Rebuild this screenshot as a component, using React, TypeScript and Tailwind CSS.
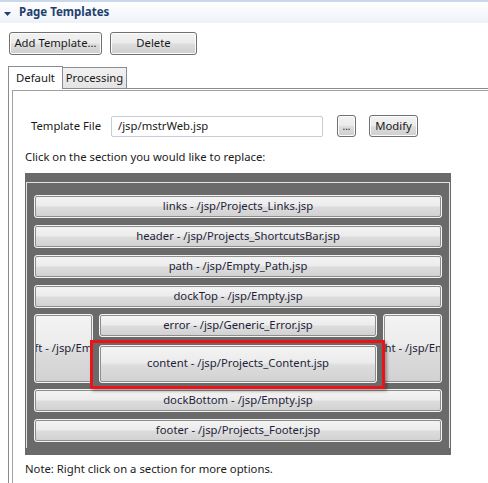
import React from 'react';

const font = { fontFamily: '"Noto Sans", "Open Sans", Arial, sans-serif' };

function WinButton({ label, className = '' }: { label: string; className?: string }) {
  return (
    <div
      className={
        'flex items-center justify-center rounded-[3px] border border-[#707070] bg-[linear-gradient(#f2f2f2_0%,#ebebeb_48%,#dddddd_52%,#cfcfcf_100%)] text-[11.3px] text-[#1a1a1a] shadow-[inset_0_0_0_1px_#fcfcfc] ' +
        className
      }
    >
      {label}
    </div>
  );
}

function Section({ label, className = '', offset = '' }: { label: string; className?: string; offset?: string }) {
  return (
    <div className={'rounded-[3px] border border-[#f4f4f4] bg-[#f4f4f4] ' + className}>
      <div
        className={
          'flex h-full items-center overflow-hidden whitespace-nowrap rounded-[2px] border border-[#8d8d8d] bg-[linear-gradient(#f3f3f3_0%,#ececec_45%,#dcdcdc_55%,#d2d2d2_100%)] text-[11.3px] text-[#1f1f3a] ' +
          (offset ? 'justify-start' : 'justify-center')
        }
      >
        {offset ? <span className={'shrink-0 ' + offset}>{label}</span> : label}
      </div>
    </div>
  );
}

export default function App() {
  return (
    <div className="relative h-[483px] w-[488px] overflow-hidden bg-white" style={font}>
      {/* section header */}
      <div className="h-[23px] border-t-[2px] border-[#c9d8ea] bg-[linear-gradient(#ffffff,#eef2f8)] pt-[1px]">
        <div className="flex items-center">
          <svg width="19" height="18" viewBox="0 0 19 18" className="shrink-0">
            <path d="M4 9 L11 9 L7.5 13 Z" fill="#1f3f6e" />
          </svg>
          <span className="text-[11.5px] font-bold text-[#1f3f6e]">Page Templates</span>
        </div>
      </div>

      {/* toolbar */}
      <div className="mt-[9px] flex gap-[8px] pl-[9px]">
        <WinButton label="Add Template..." className="h-[23px] w-[93px]" />
        <WinButton label="Delete" className="h-[23px] w-[87px]" />
      </div>

      {/* tabs */}
      <div className="mt-[11px] flex items-end pl-[8px]">
        <div className="z-10 -mb-px flex h-[23px] w-[55px] items-center justify-center border border-b-0 border-[#898c95] bg-white text-[11.3px] text-[#1a1a1a]">
          Default
        </div>
        <div className="flex h-[21px] w-[64px] items-center justify-center border border-b-0 border-l-0 border-[#898c95] bg-[linear-gradient(#f2f2f2,#e3e3e3)] text-[11.3px] text-[#1a1a1a]">
          Processing
        </div>
      </div>

      {/* tab panel */}
      <div className="ml-[8px] h-[400px] border-l border-t border-[#898c95] pl-[3px] pt-[1px]">
        <div className="h-full border-l border-t border-[#a0a0a0]">
          <div className="flex items-center pt-[24px]">
            <span className="ml-[18px] w-[80px] text-[11.3px] text-[#1a1a1a]">Template File</span>
            <div className="flex h-[21px] w-[212px] items-center rounded-[2px] border border-[#c5ccd6] pl-[6px] text-[11.3px] text-[#1a1a1a]">
              /jsp/mstrWeb.jsp
            </div>
            <WinButton label="..." className="ml-[14px] h-[22px] w-[19px] !text-[10px]" />
            <WinButton label="Modify" className="ml-[13px] h-[22px] w-[49px]" />
          </div>

          <div className="ml-[12px] mt-[12px] text-[11.3px] text-[#1a1a1a]">
            Click on the section you would like to replace:
          </div>

          {/* layout preview */}
          <div className="ml-[12px] mt-[7px] h-[282px] w-[426px] bg-[#6a6a6a] pt-[9px] pl-[1px] pr-[1px]">
            <div className="h-[266px] border border-b-0 border-[#dfe3e8] px-[7px] pt-[12px]">
              <div className="flex flex-col gap-[7px]">
                <Section label="links - /jsp/Projects_Links.jsp" className="h-[23px]" />
                <Section label="header - /jsp/Projects_ShortcutsBar.jsp" className="h-[23px]" />
                <Section label="path - /jsp/Empty_Path.jsp" className="h-[23px]" />
                <Section label="dockTop - /jsp/Empty.jsp" className="h-[23px]" />
              </div>
              <div className="relative mt-[6px] flex h-[69px] gap-[6px]">
                <Section label="left - /jsp/Empty.jsp" offset="ml-[-11px]" className="h-[69px] w-[59px]" />
                <div className="flex w-[278px] flex-col gap-[8px]">
                  <Section label="error - /jsp/Generic_Error.jsp" className="h-[23px]" />
                  <Section label="content - /jsp/Projects_Content.jsp" className="h-[38px]" />
                </div>
                <Section label="right - /jsp/Empty.jsp" offset="ml-[-15px]" className="h-[69px] w-[59px]" />
                <div className="pointer-events-none absolute left-[56px] top-[26px] h-[49px] w-[295px] border-[3px] border-[#e8141a] shadow-[2px_2px_3px_rgba(0,0,0,0.35)]" />
              </div>
              <div className="mt-[6px] flex flex-col gap-[7px]">
                <Section label="dockBottom - /jsp/Empty.jsp" className="h-[23px]" />
                <Section label="footer - /jsp/Projects_Footer.jsp" className="h-[23px]" />
              </div>
            </div>
          </div>

          <div className="ml-[12px] mt-[6px] text-[11.3px] text-[#1a1a1a]">
            Note: Right click on a section for more options.
          </div>
        </div>
      </div>
    </div>
  );
}
